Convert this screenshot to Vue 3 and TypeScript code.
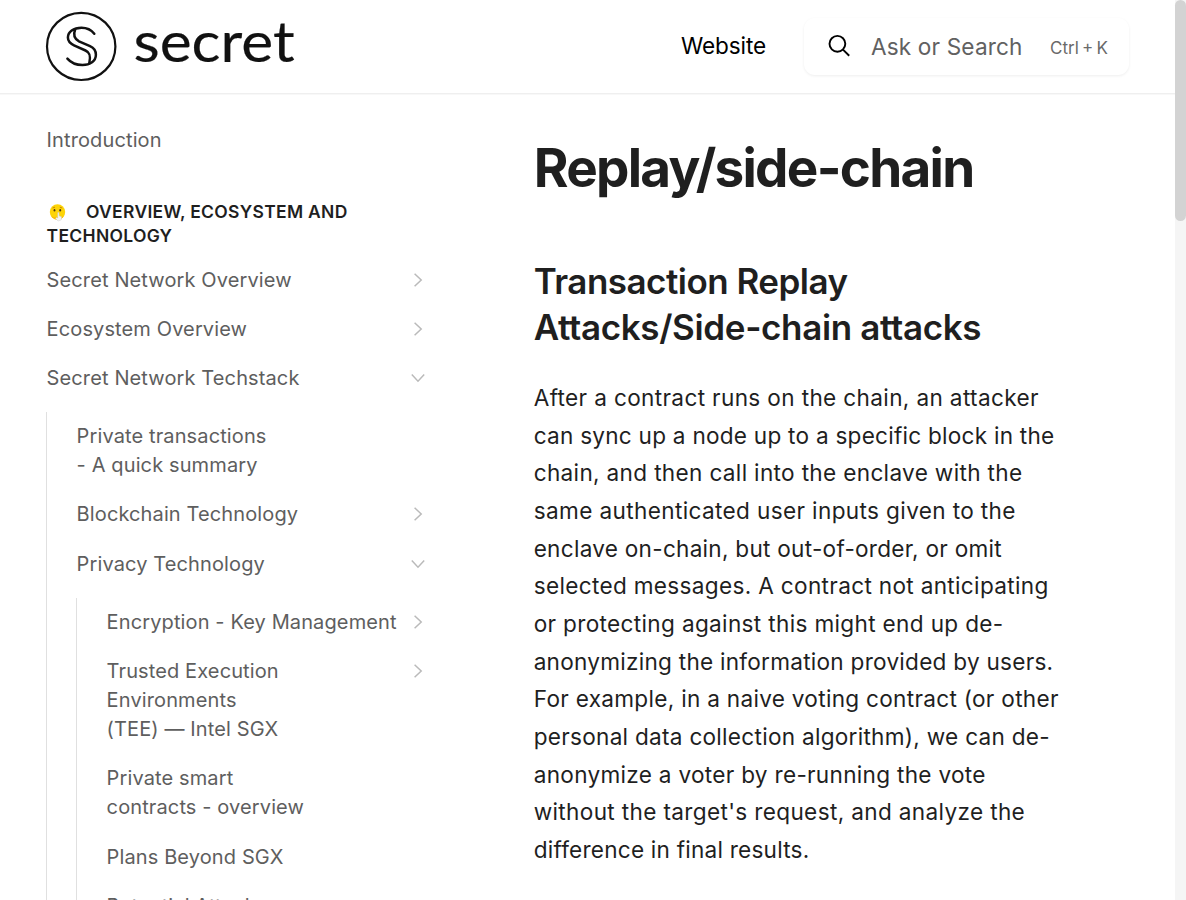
<script setup lang="ts">
interface NavNode {
  id: string
  label: string
  chevron?: 'right' | 'down'
}

interface TextLine {
  text: string
  tracking: number
}

const topLevel: NavNode[] = [
  { id: 'overview', label: 'Secret Network Overview', chevron: 'right' },
  { id: 'ecosystem', label: 'Ecosystem Overview', chevron: 'right' },
  { id: 'techstack', label: 'Secret Network Techstack', chevron: 'down' },
]

const techstack: NavNode[] = [
  { id: 'private-tx', label: 'Private transactions\n- A quick summary' },
  { id: 'blockchain', label: 'Blockchain Technology', chevron: 'right' },
  { id: 'privacy', label: 'Privacy Technology', chevron: 'down' },
]

const privacy: NavNode[] = [
  { id: 'encryption', label: 'Encryption - Key Management', chevron: 'right' },
  { id: 'tee', label: 'Trusted Execution\nEnvironments\n(TEE) — Intel SGX', chevron: 'right' },
  { id: 'contracts', label: 'Private smart\ncontracts - overview' },
  { id: 'beyond-sgx', label: 'Plans Beyond SGX' },
  { id: 'attacks', label: 'Potential Attack' },
]

const heading: TextLine[] = [
  { text: 'Transaction Replay', tracking: -0.52 },
  { text: 'Attacks/Side-chain attacks', tracking: -0.36 },
]

const paragraph: TextLine[] = [
  { text: 'After a contract runs on the chain, an attacker', tracking: 0.35 },
  { text: 'can sync up a node up to a specific block in the', tracking: 0.24 },
  { text: 'chain, and then call into the enclave with the', tracking: 0.325 },
  { text: 'same authenticated user inputs given to the', tracking: 0.36 },
  { text: 'enclave on-chain, but out-of-order, or omit', tracking: 0.26 },
  { text: 'selected messages. A contract not anticipating', tracking: 0.32 },
  { text: 'or protecting against this might end up de-', tracking: 0.33 },
  { text: 'anonymizing the information provided by users.', tracking: 0.25 },
  { text: 'For example, in a naive voting contract (or other', tracking: 0.29 },
  { text: 'personal data collection algorithm), we can de-', tracking: 0.27 },
  { text: 'anonymize a voter by re-running the vote', tracking: 0.29 },
  { text: "without the target's request, and analyze the", tracking: 0.34 },
  { text: 'difference in final results.', tracking: 0.22 },
]
</script>

<template>
  <div class="page">
    <header class="header">
      <svg class="logo" width="252" height="72" viewBox="0 0 252 72" role="img" aria-label="secret">
        <ellipse cx="36.200" cy="35.400" rx="34.200" ry="33.600" fill="none" stroke="#111" stroke-width="2.200" />
        <g fill="none" stroke="#111" stroke-width="2.500" stroke-linecap="round" stroke-linejoin="round">
          <path d="M49.300 22.700 C46 18.500 41.500 16.700 36.500 16.700 C28.500 16.700 22.900 21 22.900 26.600 C22.900 30.500 25 32.500 29 34.300 L40.500 39.500 C45 41.500 46 45 44.300 52.300" />
          <path d="M30.200 18.300 C28 24 29.500 28 34 30.300 L45 35.200 C49 37 50.900 40 50.900 43.700 C50.900 50 45 54 37.500 54 C31.500 54 26 51.800 22.400 47.600" />
        </g>
        <text class="wordmark" transform="translate(88.500 50.600) scale(1.080 1)">secret</text>
      </svg>
      <div class="actions">
        <a class="website">Website</a>
        <div class="search">
          <svg class="search-icon" width="24" height="24" viewBox="0 0 24 24">
            <circle cx="10.400" cy="9.800" r="7.900" />
            <path d="M16 15.600 L22.200 21.700" />
          </svg>
          <span class="search-label">Ask or Search</span>
          <span class="shortcut">Ctrl + K</span>
        </div>
      </div>
    </header>

    <div class="body">
      <nav class="sidebar">
        <div class="row"><span class="label">Introduction</span></div>
        <div class="group">
          <svg class="emoji" width="17" height="18" viewBox="0 0 17 18">
            <circle cx="8.500" cy="8" r="7.700" fill="#fdd406" />
            <path d="M2 12 A7.700 7.700 0 0 0 15 12 Q8 15 2 12" fill="#f9b90a" />
            <path d="M3.500 4 L6 3.200 M10.800 3.200 L13.200 4" stroke="#c98a08" stroke-width="1" />
            <ellipse cx="5.500" cy="6.300" rx=".9" ry="1.300" fill="#4a3415" />
            <ellipse cx="11.200" cy="6.300" rx=".9" ry="1.300" fill="#4a3415" />
            <path d="M8.800 8.500 L10 8.600 L10.200 12 L12.600 12.800 L12.200 16 L9 17 L6.600 14.600 L7.200 13.500 L8.700 14Z" fill="#f4f4f4" stroke="#c4c4c4" stroke-width=".4" />
          </svg>
          <span>OVERVIEW, ECOSYSTEM AND TECHNOLOGY</span>
        </div>
        <div v-for="item in topLevel" :key="item.id" class="row">
          <span class="label">{{ item.label }}</span>
          <svg class="chevron" :class="item.chevron" width="16" height="16" viewBox="0 0 16 16"><path d="M4.600 1.800 L11.200 8 L4.600 14.200" /></svg>
        </div>
        <div class="branch">
          <div v-for="item in techstack" :key="item.id" class="row">
            <span class="label">{{ item.label }}</span>
            <svg v-if="item.chevron" class="chevron" :class="item.chevron" width="16" height="16" viewBox="0 0 16 16"><path d="M4.600 1.800 L11.200 8 L4.600 14.200" /></svg>
          </div>
          <div class="branch">
            <div v-for="item in privacy" :key="item.id" class="row">
              <span class="label">{{ item.label }}</span>
              <svg v-if="item.chevron" class="chevron" :class="item.chevron" width="16" height="16" viewBox="0 0 16 16"><path d="M4.600 1.800 L11.200 8 L4.600 14.200" /></svg>
            </div>
          </div>
        </div>
      </nav>

      <main class="content">
        <h1>Replay/side-chain</h1>
        <h2>
          <span v-for="line in heading" :key="line.text" class="line" :style="{ letterSpacing: line.tracking + 'px' }">{{ line.text }}</span>
        </h2>
        <p>
          <span v-for="line in paragraph" :key="line.text" class="line" :style="{ letterSpacing: line.tracking + 'px' }">{{ line.text }}</span>
        </p>
      </main>
    </div>

    <div class="scrollbar"><div class="thumb"></div></div>
  </div>
</template>

<style>
html,
body {
  margin: 0;
  background: #fff;
  overflow: hidden;
}
</style>

<style scoped>
.page {
  position: relative;
  width: 1186px;
  height: 900px;
  overflow: hidden;
  background: #fff;
  font-family: Inter, 'Liberation Sans', sans-serif;
  color: #1f1f1f;
}
.header {
  box-sizing: border-box;
  width: 1175px;
  height: 94px;
  margin-bottom: 1px;
  padding: 1px 46px 0 45px;
  display: flex;
  align-items: center;
  justify-content: space-between;
  border-bottom: 1px solid #efefef;
  box-shadow: 0 1px 0 #f8f8f8;
}
.logo {
  display: block;
  overflow: visible;
}
.wordmark {
  font-family: Lato, sans-serif;
  font-size: 56px;
  fill: #111;
  stroke: #111;
  stroke-width: 0.200;
}
.actions {
  display: flex;
  align-items: center;
  gap: 37.800px;
  margin-top: -1px;
}
.website {
  font-size: 22.600px;
  line-height: 30px;
  letter-spacing: -0.080px;
  color: #000;
}
.search {
  box-sizing: border-box;
  width: 325px;
  height: 57px;
  padding: 0 21px 0 23px;
  display: flex;
  align-items: center;
  border-radius: 11px;
  box-shadow: 0 1px 3px rgba(0, 0, 0, 0.07);
}
.website,
.search-label,
.search-icon {
  margin-top: -1px;
}
.search-icon {
  fill: none;
  stroke: #000;
  stroke-width: 1.900;
  flex: none;
}
.search-label {
  margin-left: 20px;
  font-size: 22.600px;
  letter-spacing: 0.150px;
  color: #616161;
  white-space: nowrap;
}
.shortcut {
  margin: 2px 0 0 auto;
  font-size: 17px;
  word-spacing: -1.500px;
  color: #6a6a6a;
  white-space: nowrap;
}
.body {
  width: 1175px;
  display: flex;
}
.sidebar {
  width: 385px;
  padding: 20.650px 0 0 46px;
  flex: none;
}
.row {
  display: flex;
  align-items: flex-start;
  justify-content: space-between;
  padding: 10px 5px 10.200px 0.600px;
  font-size: 20px;
  line-height: 29.100px;
  letter-spacing: 0.120px;
  color: #5e5e5e;
}
.label {
  white-space: pre;
}
.chevron {
  flex: none;
  margin-top: 6px;
  fill: none;
  stroke: #bababa;
  stroke-width: 1.500;
}
.down {
  transform: rotate(90deg);
}
.group {
  padding: 35px 60px 7.800px 0.600px;
  font-size: 17.500px;
  font-weight: 600;
  line-height: 24px;
  letter-spacing: 0.300px;
}
.emoji {
  margin: 0 20.400px 0 2px;
  vertical-align: -4px;
}
.branch {
  margin-top: 8.500px;
  padding-left: 29px;
  border-left: 1px solid #e0e0e0;
}
.content {
  width: 540px;
  padding: 40px 0 0 102.700px;
}
.line {
  display: block;
  white-space: nowrap;
}
h1 {
  margin: 0;
  font-size: 53px;
  font-weight: 700;
  line-height: 66px;
  letter-spacing: -1.720px;
}
h2 {
  margin: 57px 0 0;
  font-size: 35px;
  font-weight: 600;
  line-height: 46px;
}
p {
  margin: 28.900px 0 0;
  font-size: 22.600px;
  line-height: 37.690px;
}
.scrollbar {
  position: absolute;
  top: 0;
  right: 0;
  width: 11px;
  height: 900px;
  background: #f5f5f5;
}
.thumb {
  height: 221px;
  border-radius: 6px;
  background: #d3d3d3;
}
</style>
